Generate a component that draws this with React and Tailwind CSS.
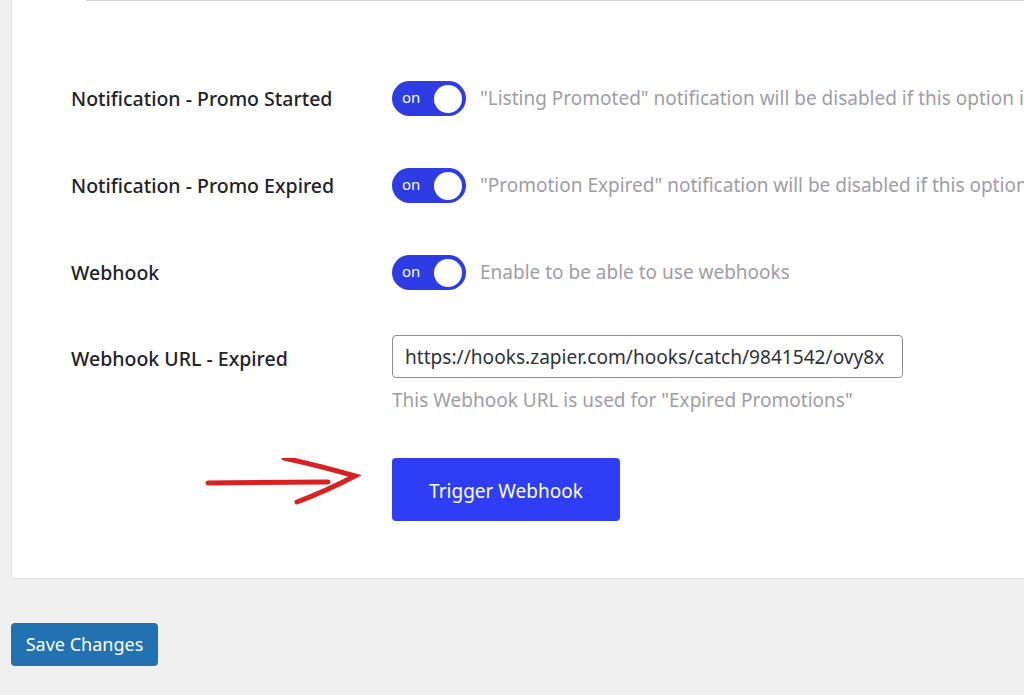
import { useState } from "react";

const font = { fontFamily: '"Noto Sans", "Open Sans", Arial, sans-serif' };

function Toggle({ on }) {
    return (
        <div className="w-[74px] h-[35px] rounded-full bg-[#2d3de3] flex items-center justify-between pl-[10px] pr-[4px] shrink-0">
            <span className="text-white text-[15px] leading-none pb-[2px]">{on ? "on" : "off"}</span>
            <span className="w-[28px] h-[28px] rounded-full bg-white"></span>
        </div>
    );
}

function ToggleRow({ label, text }) {
    return (
        <div className="h-[87px] flex items-center">
            <div className="w-[321px] shrink-0 text-[19.5px] font-medium text-[#1d2327]">{label}</div>
            <Toggle on />
            <p className="ml-[14px] text-[19px] text-[#a09ca6] whitespace-nowrap">{text}</p>
        </div>
    );
}

export default function App() {
    const [url, setUrl] = useState("https://hooks.zapier.com/hooks/catch/9841542/ovy8x");

    return (
        <div className="w-[1024px] h-[695px] overflow-hidden bg-[#f0f0f1]" style={font}>
            <div className="pl-[11px]">
                <div className="bg-white border-l border-b border-[#e2e2e4] h-[579px]">
                    <div className="ml-[74px] h-px bg-[#d3d3d6]"></div>

                    <div className="pl-[59px] pt-[54px]">
                        <ToggleRow label="Notification - Promo Started" text={'"Listing Promoted" notification will be disabled if this option is turned off'} />
                        <ToggleRow label="Notification - Promo Expired" text={'"Promotion Expired" notification will be disabled if this option is turned off'} />
                        <ToggleRow label="Webhook" text="Enable to be able to use webhooks" />

                        <div className="flex items-start pt-[19px]">
                            <div className="w-[321px] shrink-0 h-[43px] flex items-center pt-[4px] text-[19.5px] font-medium text-[#1d2327]">Webhook URL - Expired</div>
                            <div>
                                <input
                                    value={url}
                                    onChange={(e) => setUrl(e.target.value)}
                                    className="w-[511px] h-[43px] border border-[#8c8f94] rounded-[4px] pl-[12px] pr-[8px] text-[19.1px] text-[#2c3338] outline-none"
                                />
                                <p className="mt-[11px] text-[19px] leading-[22px] text-[#a09ca6]">This Webhook URL is used for "Expired Promotions"</p>
                            </div>
                        </div>

                        <div className="flex mt-[47px]">
                            <div className="w-[321px] shrink-0 h-[63px]">
                                {/* hand drawn arrow */}
                                <svg width="321" height="63" viewBox="0 0 321 63">
                                    <g stroke="#d82222" strokeWidth="5" strokeLinecap="round" fill="none">
                                        <path d="M137 25 L257 24" />
                                        <path d="M213 0 Q250 8 284 18 Q255 33 226 44" />
                                    </g>
                                </svg>
                            </div>
                            <button className="w-[228px] h-[63px] rounded-[4px] bg-[#2f3ef4] text-white text-[19px] pt-[4px]">Trigger Webhook</button>
                        </div>
                    </div>
                </div>

                <button className="mt-[44px] w-[147px] h-[43px] rounded-[4px] bg-[#2271b1] text-white text-[18px]">Save Changes</button>
            </div>
        </div>
    );
}
